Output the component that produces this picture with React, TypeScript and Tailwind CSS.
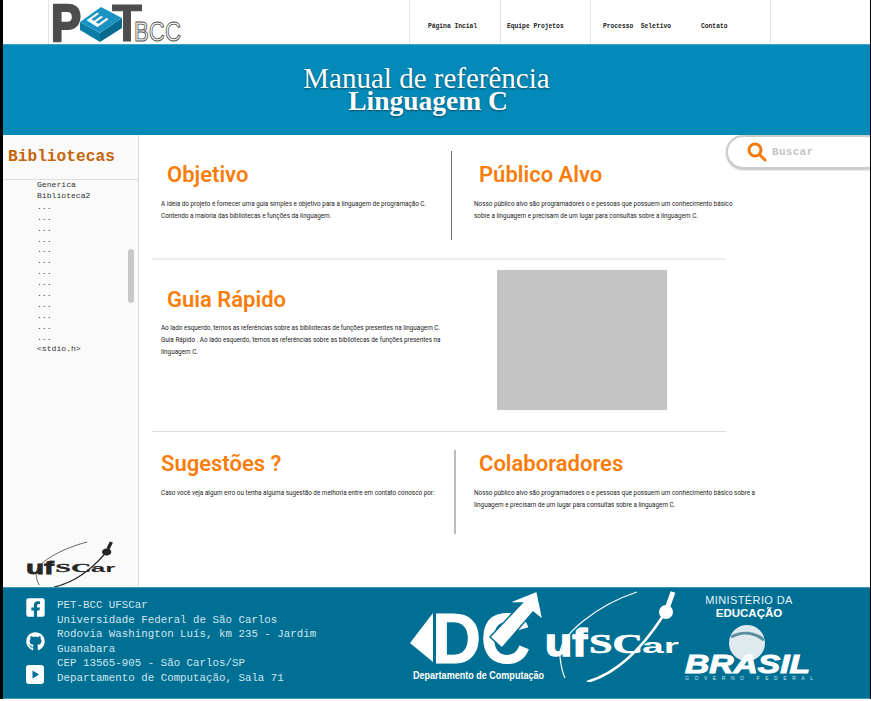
import { FaFacebookSquare, FaGithub } from "react-icons/fa";

const roboto = "font-['Roboto',sans-serif]";
const mono = "font-['Liberation_Mono',monospace]";

function PetLogo() {
  return (
    <svg width="134" height="44" viewBox="0 0 134 44" className="block">
      <text x="1" y="41" fontFamily="Liberation Sans" fontWeight="700" fontSize="52" fill="#4d4d4d" stroke="#4d4d4d" strokeWidth="2.5" strokeLinejoin="round" textLength="30" lengthAdjust="spacingAndGlyphs">P</text>
      <text x="62" y="41" fontFamily="Liberation Sans" fontWeight="700" fontSize="52" fill="#4d4d4d" stroke="#4d4d4d" strokeWidth="1" textLength="30" lengthAdjust="spacingAndGlyphs">T</text>
      <polygon points="30,22 30,30 50,42 50,33" fill="#0b7ea6" />
      <polygon points="50,33 50,42 72,28 72,18" fill="#086a8e" />
      <polygon points="30,22 51,7 72,18 50,33" fill="#1b93c2" />
      <text x="0" y="0" fontFamily="Liberation Sans" fontWeight="700" fontSize="26" fill="#fff" transform="matrix(0.75 -0.54 0.6 0.38 46 28)">E</text>
      <text x="84" y="41" fontFamily="Liberation Sans" fontSize="27" fill="none" stroke="#4d4d4d" strokeWidth="0.9" textLength="47" lengthAdjust="spacingAndGlyphs">BCC</text>
    </svg>
  );
}

function Ufscar({ color, w, h }: { color: string; w: number; h: number }) {
  return (
    <svg width={w} height={h} viewBox="0 0 135 92" preserveAspectRatio="none" className="block" fill="none">
      <path d="M92 2 C 55 14, 12 45, 15 67 C 16 76, 17 82, 20 88" stroke={color} strokeWidth="1.2" />
      <path d="M42 92 C 70 84, 96 60, 118 26" stroke={color} strokeWidth="2.5" />
      <circle cx="121" cy="22" r="7" fill={color} />
      <path d="M123 16 L128 2" stroke={color} strokeWidth="5" />
      <text x="0" y="66" fontFamily="Liberation Sans" fontWeight="700" fontSize="38" fill={color} stroke={color} strokeWidth="1.5" textLength="42" lengthAdjust="spacingAndGlyphs">uf</text>
      <text x="44" y="63" fontFamily="Liberation Serif" fontWeight="700" fontSize="27" fill={color} stroke={color} strokeWidth="0.6" textLength="54" lengthAdjust="spacingAndGlyphs">SC</text>
      <text x="97" y="63" fontFamily="Liberation Sans" fontWeight="700" fontSize="21" fill={color} textLength="37" lengthAdjust="spacingAndGlyphs">ar</text>
    </svg>
  );
}

function DcLogo() {
  return (
    <svg width="135" height="93" viewBox="0 0 135 93" className="block">
      <polygon points="0,53 23,23 23,72" fill="#fff" />
      <text x="22" y="73" fontFamily="Liberation Sans" fontWeight="700" fontSize="70" fill="#fff" stroke="#fff" strokeWidth="1" textLength="98" lengthAdjust="spacingAndGlyphs">DC</text>
      <polygon points="92,58 80,47 112,13 97,13 127,1 133,30 123,22" fill="#fff" stroke="#006f94" strokeWidth="1.5" />
      <text x="3" y="89" fontFamily="Liberation Sans" fontWeight="700" fontSize="10" fill="#fff" textLength="131" lengthAdjust="spacingAndGlyphs">Departamento de Computação</text>
    </svg>
  );
}

function MecLogo() {
  return (
    <div className="flex flex-col items-center w-[130px] pt-[4px]">
      <span className="font-['Liberation_Sans',sans-serif] text-[11px] leading-[13px] tracking-[0.4px] text-[#e8f3f7]">MINISTÉRIO DA</span>
      <span className="font-['Liberation_Sans',sans-serif] text-[11.5px] leading-[13px] font-bold text-white">EDUCAÇÃO</span>
      <svg width="130" height="62" viewBox="0 0 130 62" className="block">
        <circle cx="63" cy="23" r="18" fill="#dfeaee" />
        <path d="M47 17 C 58 11, 70 12, 80 20" stroke="#5d8fa3" strokeWidth="3" fill="none" />
        <text x="1" y="53" fontFamily="Liberation Sans" fontWeight="700" fontStyle="italic" fontSize="25" fill="#fff" stroke="#fff" strokeWidth="1" textLength="125" lengthAdjust="spacingAndGlyphs">BRASIL</text>
        <text x="1" y="60" fontFamily="Liberation Sans" fontSize="5" fill="#cfe3ea" textLength="128">GOVERNO FEDERAL</text>
      </svg>
    </div>
  );
}

function Section({ title, text, className, titleClass, textClass }: { title: string; text: string; className?: string; titleClass: string; textClass: string }) {
  return (
    <div className={className}>
      <h2 className={`${roboto} font-semibold text-[#f97d0b] leading-[26px] text-[22px] ${titleClass}`}>{title}</h2>
      <p className={`${roboto} text-[6.35px] leading-[12px] text-[#222] ${textClass}`}>{text}</p>
    </div>
  );
}

const items = ["Generica", "Biblioteca2", "...", "...", "...", "...", "...", "...", "...", "...", "...", "...", "...", "...", "...", "<stdio.h>"];

export default function App() {
  return (
    <div className="relative w-[871px] h-[701px] overflow-hidden bg-white">
      <div className="ml-[3px] mr-[1px] flex flex-col h-[699px]">
        <header className="h-[44px] flex shrink-0 bg-white">
          <div className="w-[46px] border-r border-[#e3e3e3]" />
          <div className="w-[360px] pl-[1px]"><PetLogo /></div>
          <nav className={`${mono} flex text-[6.3px] font-bold text-[#222] leading-[14px]`}>
            <div className="w-[91px] pt-[20px] border-l border-[#e3e3e3] pl-[18px]">Página Incial</div>
            <div className="w-[90px] pt-[20px] border-l border-[#e3e3e3] pl-[6px]">Equipe Projetos</div>
            <div className="w-[181px] pt-[20px] border-x border-[#e3e3e3] pl-[12px] whitespace-pre">Processo  Seletivo<span className="ml-[30px]">Contato</span></div>
          </nav>
        </header>

        <div className="h-[91px] shrink-0 bg-[#038ab8] border-t border-[#3aa5c9] flex flex-col items-center pr-[20px] pt-[19px] font-['Liberation_Serif',serif] text-white [text-shadow:0_1px_2px_rgba(0,0,0,0.45)]">
          <div className="text-[29px] leading-[28px]">Manual de referência</div>
          <div className="text-[27.5px] leading-[18px] font-bold pl-[3px]">Linguagem C</div>
        </div>

        <div className="flex flex-1 min-h-0">
          <aside className="w-[136px] shrink-0 border-r border-[#ddd] bg-[#fafafa] flex flex-col">
            <div className={`${mono} h-[45px] border-b border-[#ddd] pl-[5px] pt-[12px] text-[16.2px] leading-[20px] font-bold text-[#c5640a]`}>Bibliotecas</div>
            <div className="relative flex-1">
              <ul className={`${mono} pl-[34px] text-[8.1px] leading-[10.9px] text-[#333]`}>
                {items.map((t, i) => <li key={i}>{t}</li>)}
              </ul>
              <div className="absolute left-[125px] top-[69px] w-[6px] h-[54px] rounded-full bg-[#c8c8c8]" />
            </div>
            <div className="pl-[23px]"><Ufscar color="#262626" w={90} h={46} /></div>
          </aside>

          <main className="flex-1 min-w-0 pl-[13px]">
            <div className="h-[125px] w-[574px] border-b-2 border-[#eee] pt-[16px] flex items-start">
              <Section title="Objetivo" text="A ideia do projeto é fornecer uma guia simples e objetivo para a linguagem de programação C. Contendo a maioria das bibliotecas e funções da linguagem." className="w-[300px] shrink-0 h-[89px] border-r border-[#777] pt-[11px]" titleClass="pl-[15px]" textClass="mt-[10px] pl-[9px] w-[282px]" />
              <Section title="Público Alvo" text="Nosso público alvo são programadores o e pessoas que possuem um conhecimento básico sobre a linguagem e precisam de um lugar para consultas sobre a linguagem C." className="pl-[27px] pt-[11px] shrink-0" titleClass="" textClass="mt-[10px] -ml-[5px] w-[265px]" />
            </div>
            <div className="h-[172px] w-[574px] border-b border-[#ddd] flex items-start">
              <Section title="Guia Rápido" text="Ao lado esquerdo, temos as referências sobre as bibliotecas de funções presentes na linguagem C. Guia Rápido . Ao lado esquerdo, temos as referências sobre as bibliotecas de funções presentes na linguagem C." className="w-[345px] shrink-0 pt-[27px]" titleClass="pl-[15px]" textClass="mt-[9px] pl-[9px] w-[292px]" />
              <div className="w-[170px] h-[140px] mt-[10px] bg-[#c4c4c4]" />
            </div>
            <div className="flex items-start pt-[18px]">
              <Section title="Sugestões ?" text="Caso você veja algum erro ou tenha alguma sugestão de melhoria entre em contato conosco por:" className="w-[304px] shrink-0 h-[84px] border-r-2 border-[#bbb]" titleClass="pl-[9px] mt-[1px]" textClass="mt-[10px] pl-[9px]" />
              <Section title="Colaboradores" text="Nosso público alvo são programadores o e pessoas que possuem um conhecimento básico sobre a linguagem e precisam de um lugar para consultas sobre a linguagem C." className="pl-[23px] shrink-0" titleClass="mt-[1px]" textClass="mt-[10px] -ml-[5px] w-[285px]" />
            </div>
          </main>
        </div>

        <footer className="h-[112px] shrink-0 bg-[#006f94] border-y border-[#3a9abb] flex">
          <div className="w-[23px] shrink-0" />
          <div className="w-[18px] shrink-0 flex flex-col text-white pt-[9px] gap-[14px]">
            <FaFacebookSquare size={21} className="-ml-[1px]" />
            <FaGithub size={19} />
            <svg width="18" height="19" viewBox="0 0 18 19" fill="white">
              <path fillRule="evenodd" d="M3 0h12a3 3 0 0 1 3 3v13a3 3 0 0 1-3 3H3a3 3 0 0 1-3-3V3a3 3 0 0 1 3-3zM6.5 5.5v8l6.5-4z" />
            </svg>
          </div>
          <div className={`${mono} w-[366px] shrink-0 pl-[13px] pr-[80px] pt-[10px] text-[10.8px] leading-[14.5px] text-[#cfe6ee]`}>
            PET-BCC UFSCar<br />
            Universidade Federal de São Carlos<br />
            Rodovia Washington Luís, km 235 - Jardim Guanabara<br />
            CEP 13565-905 - São Carlos/SP<br />
            Departamento de Computação, Sala 71
          </div>
          <div className="flex items-start pt-[2px]">
            <DcLogo />
            <Ufscar color="#ffffff" w={135} h={92} />
            <div className="ml-[4px]"><MecLogo /></div>
          </div>
        </footer>
      </div>

      <div className="absolute left-0 top-0 w-[3px] h-[699px] bg-black" />
      <div className="absolute right-0 top-0 w-[1px] h-[699px] bg-black" />

      <div className="absolute left-[726px] top-[135px] w-[144px] h-[34px] rounded-l-full border-2 border-r-0 border-[#ccc] bg-white flex items-center pl-[19px] gap-[5px] shadow-[0_1px_2px_rgba(0,0,0,0.25)]">
        <svg width="20" height="20" viewBox="0 0 20 20" fill="none" stroke="#f27a0c" strokeWidth="3" strokeLinecap="round">
          <circle cx="8" cy="8" r="6" />
          <path d="M13 13l5 5" />
        </svg>
        <span className={`${mono} text-[11px] font-bold text-[#c4c4c4] tracking-[0.3px]`}>Buscar</span>
      </div>
    </div>
  );
}
